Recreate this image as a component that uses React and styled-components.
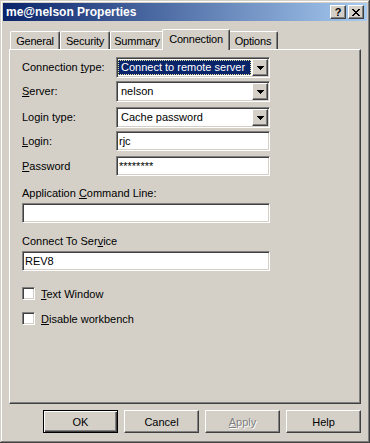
import styled, { createGlobalStyle, css } from "styled-components";

const GlobalStyle = createGlobalStyle`
  html, body {
    margin: 0;
    padding: 0;
    background: #d4d0c8;
  }
  body {
    font-family: "Liberation Sans", Arial, sans-serif;
    font-size: 11px;
    color: #000;
  }
`;

/* classic 3D bevels */
const sunken = css`
  border: 1px solid;
  border-color: #808080 #ffffff #ffffff #808080;
  box-shadow: inset 1px 1px #404040, inset -1px -1px #d4d0c8;
`;

const raised = css`
  border: 1px solid;
  border-color: #ffffff #404040 #404040 #ffffff;
  box-shadow: inset -1px -1px #808080;
`;

const Dialog = styled.div`
  width: 370px;
  height: 443px;
  box-sizing: border-box;
  padding: 3px;
  background: #d4d0c8;
  display: flex;
  flex-direction: column;
  box-shadow: inset -1px -1px #404040, inset 1px 1px #d4d0c8,
    inset -2px -2px #808080, inset 2px 2px #ffffff;
`;

const TitleBar = styled.div`
  height: 18px;
  display: flex;
  align-items: center;
  padding: 0 3px 0 3px;
  background: linear-gradient(to right, #0a246a, #a6caf0);
`;

const Title = styled.div`
  flex: 1;
  color: #fff;
  font-weight: bold;
  font-size: 12px;
  white-space: nowrap;
`;

const CaptionButton = styled.div`
  width: 16px;
  height: 14px;
  box-sizing: border-box;
  ${raised};
  background: #d4d0c8;
  display: flex;
  align-items: center;
  justify-content: center;
  margin-left: ${({ $gap }) => $gap || 0}px;
  font-weight: bold;
  font-size: 11px;
  line-height: 1;
`;

const Body = styled.div`
  flex: 1;
  display: flex;
  flex-direction: column;
  padding: 8px 6px 0 6px;
`;

const TabRow = styled.div`
  display: flex;
  align-items: flex-end;
  height: 20px;
  padding-left: 1px;
`;

const Tab = styled.div`
  box-sizing: border-box;
  width: ${({ $w }) => $w}px;
  height: 18px;
  background: #d4d0c8;
  border-top: 1px solid #fff;
  border-left: 1px solid #fff;
  border-right: 1px solid #404040;
  box-shadow: inset -1px 0 #808080;
  border-radius: 2px 2px 0 0;
  display: flex;
  justify-content: center;
  padding-top: 3px;
  white-space: nowrap;
  letter-spacing: -0.2px;

  ${({ $active }) =>
    $active &&
    css`
      position: relative;
      z-index: 1;
      height: 21px;
      margin: 0 -2px -1px -2px;
      width: ${({ $w }) => $w + 4}px;
      padding-top: 3px;
    `}
`;

const Panel = styled.div`
  height: 355px;
  box-sizing: border-box;
  ${raised};
  padding: 7px 12px 0 12px;
  display: flex;
  flex-direction: column;
`;

const FieldRow = styled.div`
  display: flex;
  align-items: center;
  margin-top: ${({ $top }) => $top}px;
`;

const Label = styled.div`
  width: 94px;
  white-space: nowrap;
  line-height: 13px;
`;

const Caption = styled.div`
  line-height: 13px;
  margin-top: ${({ $top }) => $top}px;
  white-space: nowrap;
`;

const Key = styled.span`
  text-decoration: underline;
`;

const Combo = styled.div`
  width: 154px;
  height: 21px;
  box-sizing: border-box;
  ${sunken};
  background: #fff;
  padding: 1px;
  display: flex;
`;

const ComboText = styled.div`
  flex: 1;
  margin: 1px 1px 1px 0;
  padding-left: 2px;
  line-height: 13px;
  white-space: nowrap;
  overflow: hidden;
  box-sizing: border-box;
  border: 1px solid transparent;

  ${({ $selected }) =>
    $selected &&
    css`
      background: #0a246a;
      color: #fff;
      border: 1px dotted #e8e4a0;
    `}
`;

const DropButton = styled.div`
  width: 16px;
  height: 17px;
  box-sizing: border-box;
  ${raised};
  background: #d4d0c8;
  display: flex;
  align-items: center;
  justify-content: center;
`;

const Edit = styled.div`
  width: ${({ $w }) => $w || 154}px;
  height: 20px;
  box-sizing: border-box;
  ${sunken};
  background: #fff;
  padding: 0 2px;
  display: flex;
  align-items: center;
  white-space: nowrap;
  margin-top: ${({ $top }) => $top || 0}px;
`;

const CheckRow = styled.div`
  display: flex;
  align-items: center;
  margin-top: ${({ $top }) => $top}px;
`;

const CheckBox = styled.div`
  width: 13px;
  height: 13px;
  box-sizing: border-box;
  ${sunken};
  background: #fff;
  margin-right: 6px;
`;

const ButtonRow = styled.div`
  display: flex;
  justify-content: flex-end;
  gap: 6px;
  margin-top: 6px;
`;

const Button = styled.div`
  width: 75px;
  height: 23px;
  box-sizing: border-box;
  ${raised};
  background: #d4d0c8;
  display: flex;
  align-items: center;
  justify-content: center;
  color: ${({ $disabled }) => ($disabled ? "#808080" : "#000")};
  text-shadow: ${({ $disabled }) => ($disabled ? "1px 1px #fff" : "none")};

  ${({ $default }) =>
    $default &&
    css`
      border: 1px solid #000;
      box-shadow: inset 1px 1px #fff, inset -1px -1px #404040,
        inset -2px -2px #808080;
    `}
`;

const DownArrow = () => (
  <svg width="7" height="4" viewBox="0 0 7 4" shapeRendering="crispEdges">
    <path d="M0 0h7v1h-1v1h-1v1h-1v1h-1v-1h-1v-1h-1v-1h-1z" fill="#000" />
  </svg>
);

const CloseGlyph = () => (
  <svg width="8" height="7" viewBox="0 0 8 7" shapeRendering="crispEdges">
    <path
      d="M0 0h2v1h1v1h2v-1h1v-1h2v1h-1v1h-1v1h-1v1h1v1h1v1h1v1h-2v-1h-1v-1h-2v1h-1v1h-2v-1h1v-1h1v-1h1v-1h-1v-1h-1v-1h-1z"
      fill="#000"
    />
  </svg>
);

const tabs = [
  { name: "General", w: 50 },
  { name: "Security", w: 50 },
  { name: "Summary", w: 54 },
  { name: "Connection", w: 64, active: true },
  { name: "Options", w: 50 },
];

export default function App() {
  return (
    <>
      <GlobalStyle />
      <Dialog>
        <TitleBar>
          <Title>me@nelson Properties</Title>
          <CaptionButton>?</CaptionButton>
          <CaptionButton $gap={2}>
            <CloseGlyph />
          </CaptionButton>
        </TitleBar>
        <Body>
          <TabRow>
            {tabs.map((t) => (
              <Tab key={t.name} $w={t.w} $active={t.active}>
                {t.name}
              </Tab>
            ))}
          </TabRow>
          <Panel>
            <FieldRow $top={0}>
              <Label>
                Connection <Key>t</Key>ype:
              </Label>
              <Combo>
                <ComboText $selected>Connect to remote server</ComboText>
                <DropButton>
                  <DownArrow />
                </DropButton>
              </Combo>
            </FieldRow>
            <FieldRow $top={3}>
              <Label>
                <Key>S</Key>erver:
              </Label>
              <Combo>
                <ComboText>nelson</ComboText>
                <DropButton>
                  <DownArrow />
                </DropButton>
              </Combo>
            </FieldRow>
            <FieldRow $top={5}>
              <Label>Login type:</Label>
              <Combo>
                <ComboText>Cache password</ComboText>
                <DropButton>
                  <DownArrow />
                </DropButton>
              </Combo>
            </FieldRow>
            <FieldRow $top={3}>
              <Label>
                <Key>L</Key>ogin:
              </Label>
              <Edit>rjc</Edit>
            </FieldRow>
            <FieldRow $top={5}>
              <Label>
                <Key>P</Key>assword
              </Label>
              <Edit>********</Edit>
            </FieldRow>

            <Caption $top={11}>
              Application <Key>C</Key>ommand Line:
            </Caption>
            <Edit $w={248} $top={3} />

            <Caption $top={12}>
              Connect To Ser<Key>v</Key>ice
            </Caption>
            <Edit $w={248} $top={3}>
              REV8
            </Edit>

            <CheckRow $top={16}>
              <CheckBox />
              <span>
                <Key>T</Key>ext Window
              </span>
            </CheckRow>
            <CheckRow $top={12}>
              <CheckBox />
              <span>
                <Key>D</Key>isable workbench
              </span>
            </CheckRow>
          </Panel>
          <ButtonRow>
            <Button $default>OK</Button>
            <Button>Cancel</Button>
            <Button $disabled>
              <span>
                <Key>A</Key>pply
              </span>
            </Button>
            <Button>Help</Button>
          </ButtonRow>
        </Body>
      </Dialog>
    </>
  );
}
